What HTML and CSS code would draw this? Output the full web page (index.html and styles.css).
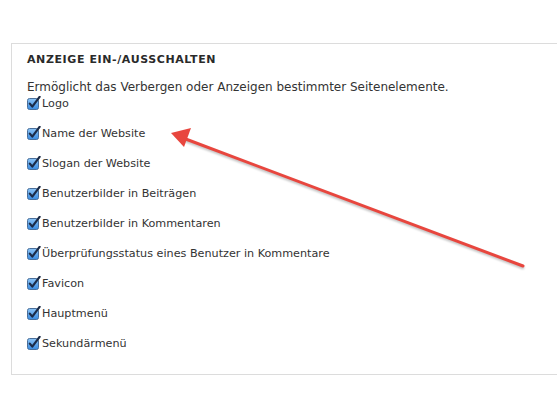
FILE: index.html
```html
<!DOCTYPE html>
<html lang="de">
<head>
<meta charset="utf-8">
<link rel="stylesheet" href="styles.css">
</head>
<body>
<div class="panel">
  <h2 class="title">Anzeige ein-/ausschalten</h2>
  <p class="desc">Ermöglicht das Verbergen oder Anzeigen bestimmter Seitenelemente.</p>
  <ul class="list">
    <li class="item"><svg class="cb" viewBox="0 0 14 14"><defs><linearGradient id="g" x1="0" y1="0" x2="0" y2="1"><stop offset="0" stop-color="#8cc4f6"/><stop offset="1" stop-color="#3a8be0"/></linearGradient></defs><rect x="0.5" y="2.5" width="11" height="11" rx="2" fill="url(#g)" stroke="#4a6f9a"/><path d="M2.8 7.6 L5.3 10.6 L12.6 0.8" fill="none" stroke="#1c2c48" stroke-width="2.2" stroke-linecap="round" stroke-linejoin="round"/></svg><span>Logo</span></li>
    <li class="item"><svg class="cb" viewBox="0 0 14 14"><rect x="0.5" y="2.5" width="11" height="11" rx="2" fill="url(#g)" stroke="#4a6f9a"/><path d="M2.8 7.6 L5.3 10.6 L12.6 0.8" fill="none" stroke="#1c2c48" stroke-width="2.2" stroke-linecap="round" stroke-linejoin="round"/></svg><span>Name der Website</span></li>
    <li class="item"><svg class="cb" viewBox="0 0 14 14"><rect x="0.5" y="2.5" width="11" height="11" rx="2" fill="url(#g)" stroke="#4a6f9a"/><path d="M2.8 7.6 L5.3 10.6 L12.6 0.8" fill="none" stroke="#1c2c48" stroke-width="2.2" stroke-linecap="round" stroke-linejoin="round"/></svg><span>Slogan der Website</span></li>
    <li class="item"><svg class="cb" viewBox="0 0 14 14"><rect x="0.5" y="2.5" width="11" height="11" rx="2" fill="url(#g)" stroke="#4a6f9a"/><path d="M2.8 7.6 L5.3 10.6 L12.6 0.8" fill="none" stroke="#1c2c48" stroke-width="2.2" stroke-linecap="round" stroke-linejoin="round"/></svg><span>Benutzerbilder in Beiträgen</span></li>
    <li class="item"><svg class="cb" viewBox="0 0 14 14"><rect x="0.5" y="2.5" width="11" height="11" rx="2" fill="url(#g)" stroke="#4a6f9a"/><path d="M2.8 7.6 L5.3 10.6 L12.6 0.8" fill="none" stroke="#1c2c48" stroke-width="2.2" stroke-linecap="round" stroke-linejoin="round"/></svg><span>Benutzerbilder in Kommentaren</span></li>
    <li class="item"><svg class="cb" viewBox="0 0 14 14"><rect x="0.5" y="2.5" width="11" height="11" rx="2" fill="url(#g)" stroke="#4a6f9a"/><path d="M2.8 7.6 L5.3 10.6 L12.6 0.8" fill="none" stroke="#1c2c48" stroke-width="2.2" stroke-linecap="round" stroke-linejoin="round"/></svg><span>Überprüfungsstatus eines Benutzer in Kommentare</span></li>
    <li class="item"><svg class="cb" viewBox="0 0 14 14"><rect x="0.5" y="2.5" width="11" height="11" rx="2" fill="url(#g)" stroke="#4a6f9a"/><path d="M2.8 7.6 L5.3 10.6 L12.6 0.8" fill="none" stroke="#1c2c48" stroke-width="2.2" stroke-linecap="round" stroke-linejoin="round"/></svg><span>Favicon</span></li>
    <li class="item"><svg class="cb" viewBox="0 0 14 14"><rect x="0.5" y="2.5" width="11" height="11" rx="2" fill="url(#g)" stroke="#4a6f9a"/><path d="M2.8 7.6 L5.3 10.6 L12.6 0.8" fill="none" stroke="#1c2c48" stroke-width="2.2" stroke-linecap="round" stroke-linejoin="round"/></svg><span>Hauptmenü</span></li>
    <li class="item"><svg class="cb" viewBox="0 0 14 14"><rect x="0.5" y="2.5" width="11" height="11" rx="2" fill="url(#g)" stroke="#4a6f9a"/><path d="M2.8 7.6 L5.3 10.6 L12.6 0.8" fill="none" stroke="#1c2c48" stroke-width="2.2" stroke-linecap="round" stroke-linejoin="round"/></svg><span>Sekundärmenü</span></li>
  </ul>
</div>
<svg class="arrow" viewBox="0 0 557 418" width="557" height="418">
  <defs><filter id="sh" x="-10%" y="-10%" width="120%" height="120%"><feGaussianBlur stdDeviation="1.2"/></filter></defs>
  <g opacity="0.25" filter="url(#sh)" transform="translate(1,2)">
    <line x1="183" y1="138" x2="523" y2="266" stroke="#000" stroke-width="3"/>
  </g>
  <line x1="183" y1="138" x2="523" y2="266" stroke="#e8463e" stroke-width="3" stroke-linecap="round"/>
  <polygon points="171,133 191,128 184,147" fill="#e8463e"/>
</svg>
</body>
</html>
```
FILE: styles.css
```css
html, body {
  margin: 0;
  padding: 0;
  background: #fff;
  overflow: hidden;
}
body {
  width: 557px;
  height: 418px;
  position: relative;
  font-family: "DejaVu Sans", "Liberation Sans", sans-serif;
  color: #333;
}
.panel {
  margin: 43px 0 0 11px;
  width: 560px;
  height: 332px;
  border: 1px solid #dcdcdc;
  border-right: none;
  box-sizing: border-box;
  padding: 9px 0 0 15px;
}
.title {
  margin: 0;
  font-size: 11px;
  font-weight: bold;
  text-transform: uppercase;
  letter-spacing: 0.6px;
  line-height: 14px;
  color: #2a2a2a;
}
.desc {
  margin: 12px 0 0 0;
  font-size: 12px;
  line-height: 16px;
  color: #333;
}
.list {
  list-style: none;
  margin: 0;
  padding: 0;
  display: flex;
  flex-direction: column;
  gap: 14px;
}
.item {
  display: flex;
  align-items: center;
  height: 16px;
  font-size: 11.2px;
  color: #333;
}
.cb {
  width: 14px;
  height: 14px;
  margin-right: 1px;
  flex: none;
}
.arrow {
  position: absolute;
  left: 0;
  top: 0;
  pointer-events: none;
}
```
